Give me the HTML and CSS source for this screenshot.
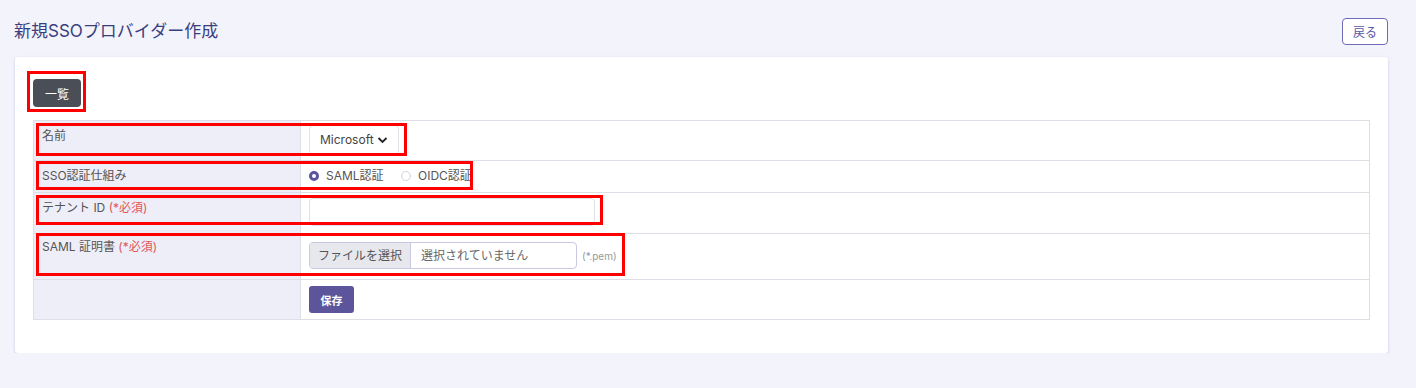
FILE: index.html
```html
<!DOCTYPE html>
<html lang="ja">
<head>
    <meta charset="UTF-8">
    <meta name="viewport" content="width=device-width, initial-scale=1.0">
    <title>新規SSOプロバイダー作成</title>
    <link rel="stylesheet" href="styles.css">
</head>
<body>
    <div class="page-header">
        <h1>新規SSOプロバイダー作成</h1>
        <button class="btn-back">戻る</button>
    </div>
    <div class="card">
        <button class="btn-list">一覧</button>
        <table class="form-table">
            <tr class="row-name">
                <th>名前</th>
                <td>
                    <div class="select-box">Microsoft
                        <svg width="11" height="8" viewBox="0 0 11 8"><path d="M1.5 2 L5.5 6 L9.5 2" fill="none" stroke="#222" stroke-width="1.8"/></svg>
                    </div>
                </td>
            </tr>
            <tr class="row-sso">
                <th>SSO認証仕組み</th>
                <td>
                    <label class="radio"><span class="radio-dot checked"></span>SAML認証</label>
                    <label class="radio"><span class="radio-dot"></span>OIDC認証</label>
                </td>
            </tr>
            <tr class="row-tenant">
                <th>テナント ID <span class="required">(*必須)</span></th>
                <td><input type="text" class="text-input"></td>
            </tr>
            <tr class="row-cert">
                <th>SAML 証明書 <span class="required">(*必須)</span></th>
                <td>
                    <div class="file-row">
                        <div class="file-box">
                            <span class="file-btn">ファイルを選択</span>
                            <span class="file-name">選択されていません</span>
                        </div>
                        <span class="file-hint">(*.pem)</span>
                    </div>
                </td>
            </tr>
            <tr class="row-save">
                <th></th>
                <td><button class="btn-save">保存</button></td>
            </tr>
        </table>

        <!-- 注釈の赤枠 -->
        <div class="mark mark-list"></div>
        <div class="mark mark-name"></div>
        <div class="mark mark-sso"></div>
        <div class="mark mark-tenant"></div>
        <div class="mark mark-cert"></div>
    </div>
</body>
</html>
```

FILE: styles.css
```css
body {
    margin: 0;
    background-color: #f3f3fc;
    font-family: Inter, "Noto Sans CJK JP", sans-serif;
    color: #555;
}
.page-header {
    display: flex;
    justify-content: space-between;
    align-items: flex-start;
    box-sizing: border-box;
    height: 57px;
    padding: 18px 28px 0 14px;
}
.page-header h1 {
    margin: 1px 0 0 0;
    font-size: 17px;
    line-height: 24px;
    font-weight: 400;
    color: #3b3e7c;
}
.btn-back {
    font-family: inherit;
    font-size: 12px;
    color: #5b56a8;
    background-color: #fff;
    border: 1px solid #6f6ab8;
    border-radius: 4px;
    width: 46px;
    height: 27px;
    padding: 0;
}
.card {
    position: relative;
    margin: 0 28px 0 15px;
    background-color: #fff;
    border-radius: 3px;
    box-shadow: 0 1px 3px rgba(120, 125, 170, 0.35);
    padding: 22px 18px 33px 18px;
}
.btn-list {
    display: block;
    font-family: inherit;
    font-size: 12px;
    color: #fff;
    background-color: #4a4e57;
    border: none;
    border-radius: 4px;
    width: 48px;
    height: 28px;
    padding: 0;
    margin-bottom: 13px;
}
.form-table {
    width: 100%;
    border-collapse: collapse;
    font-size: 12px;
    line-height: 16px;
}
.form-table th,
.form-table td {
    border: 1px solid #dedee6;
    text-align: left;
    vertical-align: top;
    padding: 0 8px;
}
.form-table th {
    width: 250px;
    background-color: #eeeef8;
    font-weight: 400;
    color: #555;
}
.required {
    color: #e05656;
}
.row-name {
    height: 40px;
}
.row-name th {
    padding-top: 7px;
}
.row-name td {
    padding-top: 4px;
}
.row-sso {
    height: 32px;
}
.row-sso th,
.row-sso td {
    padding-top: 7px;
}
.row-tenant {
    height: 41px;
}
.row-tenant th {
    padding-top: 7px;
}
.row-tenant td {
    padding-top: 5px;
}
.row-cert {
    height: 46px;
}
.row-cert th {
    padding-top: 5px;
}
.row-cert td {
    padding-top: 8px;
}
.row-save {
    height: 40px;
}
.row-save td {
    padding-top: 6px;
}
.select-box {
    display: inline-flex;
    align-items: center;
    gap: 3px;
    box-sizing: border-box;
    height: 30px;
    padding: 0 10px;
    border: 1px solid #e2e2e8;
    border-radius: 4px;
    color: #444;
}
.radio {
    display: inline-flex;
    align-items: center;
    margin-right: 14px;
    color: #555;
}
.radio-dot {
    display: inline-block;
    width: 8px;
    height: 8px;
    border: 1px solid #cfd0dc;
    border-radius: 50%;
    background-color: #fff;
    margin-right: 7px;
}
.radio-dot.checked {
    width: 4px;
    height: 4px;
    border: 3px solid #5b559c;
}
.text-input {
    display: block;
    box-sizing: border-box;
    width: 286px;
    height: 28px;
    border: 1px solid #e0e0e8;
    border-radius: 4px;
    margin: 0;
}
.file-row {
    display: flex;
    align-items: center;
    gap: 5px;
}
.file-box {
    display: flex;
    width: 268px;
    height: 27px;
    box-sizing: border-box;
    border: 1px solid #c8c8e0;
    border-radius: 4px;
    overflow: hidden;
}
.file-btn {
    display: flex;
    align-items: center;
    padding: 0 8px;
    background-color: #e6e8ee;
    border-right: 1px solid #c8c8e0;
    color: #555;
}
.file-name {
    display: flex;
    align-items: center;
    padding: 0 10px;
    color: #666;
}
.file-hint {
    font-size: 10px;
    color: #999;
}
.btn-save {
    display: block;
    font-family: inherit;
    font-size: 11px;
    font-weight: 700;
    color: #fff;
    background-color: #5c559b;
    border: none;
    border-radius: 3px;
    width: 45px;
    height: 27px;
    padding: 0;
}
.mark {
    position: absolute;
    border: 3px solid #f00;
    box-sizing: border-box;
}
.mark-list {
    left: 12px;
    top: 14px;
    width: 59px;
    height: 41px;
}
.mark-name {
    left: 21px;
    top: 66px;
    width: 371px;
    height: 33px;
}
.mark-sso {
    left: 21px;
    top: 104px;
    width: 437px;
    height: 29px;
}
.mark-tenant {
    left: 21px;
    top: 138px;
    width: 567px;
    height: 30px;
}
.mark-cert {
    left: 21px;
    top: 176px;
    width: 589px;
    height: 43px;
}
```
